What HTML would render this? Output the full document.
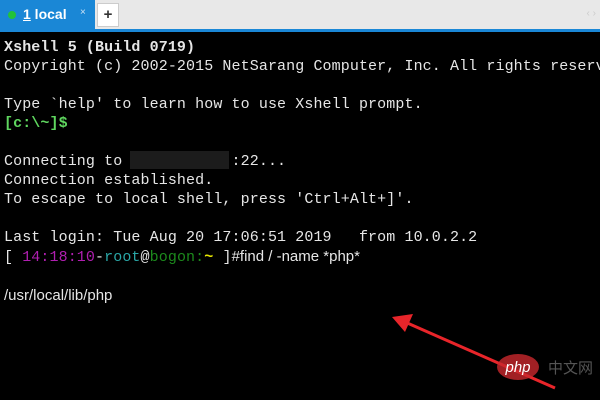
<!DOCTYPE html>
<html><head><style>
html,body{margin:0;padding:0;width:600px;height:400px;overflow:hidden;background:#000}
.bar{position:absolute;left:0;top:0;width:600px;height:29px;background:#e8e8e8}
.tab{position:absolute;left:0;top:0;width:95px;height:29px;background:#1a87d6}
.dot{position:absolute;left:8px;top:11px;width:8px;height:8px;border-radius:50%;background:#22c33a}
.tt{position:absolute;left:23px;top:6px;color:#fff;font:bold 14px "Liberation Sans",sans-serif}
.x{position:absolute;left:80px;top:7px;color:#cfe3f5;font:10px "Liberation Sans",sans-serif}
.plus{position:absolute;left:97px;top:3px;width:20px;height:22px;background:#fff;border:1px solid #ccc;text-align:center;font:bold 15px/22px "Liberation Sans",sans-serif;color:#333}
.line{position:absolute;left:0;top:29px;width:600px;height:3px;background:#1a87d6}
.arr{position:absolute;right:4px;top:8px;color:#ccc;font:10px "Liberation Sans",sans-serif}
pre{position:absolute;left:4px;top:38px;margin:0;font:15px/19px "Liberation Mono",monospace;letter-spacing:0.1px;color:#e6e6e6;white-space:pre}
.s{font-family:"Liberation Sans",sans-serif;letter-spacing:0}
.red{position:absolute;left:130px;top:151px;width:99px;height:18px;background:#1c1c1c}
</style></head><body>
<div class="bar"></div>
<div class="tab"><div class="dot"></div><div class="tt"><u>1</u> local</div><div class="x">×</div></div>
<div class="plus">+</div>
<div class="arr">‹ ›</div>
<div class="line"></div>
<pre><b>Xshell 5 (Build 0719)</b>
Copyright (c) 2002-2015 NetSarang Computer, Inc. All rights reserv

Type `help' to learn how to use Xshell prompt.
<b style="color:#5fd75f">[c:\~]$</b>

Connecting to            :22...
Connection established.
To escape to local shell, press 'Ctrl+Alt+]'.

Last login: Tue Aug 20 17:06:51 2019   from 10.0.2.2
[ <span style="color:#b01fb0">14:18:10</span>-<span style="color:#2aa6a6">root</span>@<span style="color:#1c8a1c">bogon:</span><b style="color:#e6e600">~</b> ]<span class="s">#find / -name *php*</span>

<span class="s">/usr/local/lib/php</span></pre>
<div class="red"></div>
<svg style="position:absolute;left:0;top:0" width="600" height="400">
<line x1="405" y1="322" x2="555" y2="388" stroke="#e8252a" stroke-width="3"/>
<polygon points="392,317 413,314 405,332" fill="#e8252a"/>
<ellipse cx="518" cy="367" rx="21" ry="13" fill="#c9282d" opacity="0.8"/>
<text x="518" y="372" text-anchor="middle" fill="#fff" font-family="Liberation Sans,sans-serif" font-style="italic" font-size="15">php</text>
<text x="548" y="373" fill="#555" font-family="Liberation Sans,Noto Sans CJK SC,sans-serif" font-size="15">中文网</text>
</svg>
</body></html>
